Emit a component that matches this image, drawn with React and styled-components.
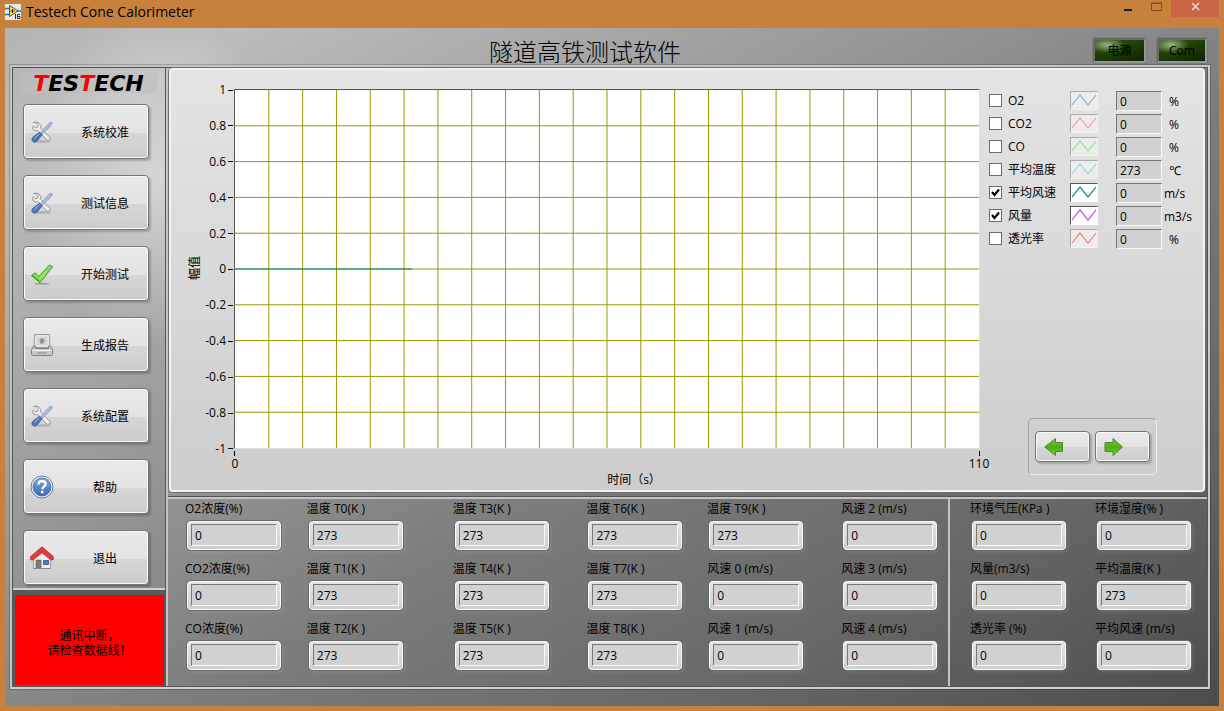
import { useState } from 'react'
import styled, { createGlobalStyle } from 'styled-components'

const GlobalStyle = createGlobalStyle`
    * {
        box-sizing: border-box;
    }

    body {
        margin: 0;
        background: #c8813c;
        color: #000;
        font-family: 'Open Sans', 'Noto Sans', 'Noto Sans CJK SC', sans-serif;
        font-size: 12px;
        line-height: 16px;
    }

    button, input {
        font: inherit;
        color: inherit;
    }
`

const Window = styled.div`
    min-height: 100vh;
    display: flex;
    flex-direction: column;
    padding: 0 5px 5px;
    background: #c8813c;
`

const TitleBar = styled.header`
    height: 28px;
    display: flex;
    align-items: flex-start;
`

const AppName = styled.div`
    flex: 1;
    display: flex;
    align-items: center;
    gap: 5px;
    padding-top: 2px;
    font-size: 14px;
    line-height: 20px;
`

const WindowButton = styled.button`
    width: ${props => props.$close ? '48px' : '29px'};
    height: 17px;
    padding: 0 0 4px;
    border: 0;
    display: flex;
    align-items: center;
    justify-content: center;
    background: ${props => props.$close ? '#c86646' : 'transparent'};
`

const Content = styled.main`
    flex: 1;
    display: flex;
    flex-direction: column;
    padding: 0 9px 17px 5px;
    background:
        radial-gradient(130px 170px at 150px 150px, rgba(255, 255, 255, .45), rgba(255, 255, 255, 0)),
        linear-gradient(150deg, #b4b4b4 0%, #bcbcbc 10%, #a8a8a8 25%, #909090 43%, #7c7c7c 57%, #686868 78%, #4c4c4c 100%);
`

const Header = styled.div`
    height: 37px;
    display: flex;
    align-items: flex-start;
    gap: 11px;
    padding: 10px 3px 0 78px;
`

const Title = styled.h1`
    flex: 1;
    margin: 0;
    text-align: center;
    font-family: 'Noto Sans CJK SC', sans-serif;
    font-weight: 300;
    font-size: 24px;
    line-height: 26px;
`

const Led = styled.div`
    width: ${props => props.$wide ? '53px' : '50px'};
    height: 25px;
    border: 2px solid;
    border-color: #686868 #969696 #969696 #686868;
    outline: 1px solid rgba(0, 0, 0, .08);
    text-align: center;
    line-height: 22px;
    background:
        radial-gradient(ellipse at 12px 5px, rgba(190, 215, 160, .75), rgba(120, 160, 80, 0) 18px),
        linear-gradient(160deg, #35551a, #1d3d06 50%, #0d2400);
`

const Frame = styled.div`
    flex: 1;
    display: flex;
    border: 2px solid;
    border-color: #c4c4c4 #cccccc #d0d0d0 #c4c4c4;
    outline: 1px solid rgba(0, 0, 0, .2);
    box-shadow: inset 0 0 0 1px #555;
    padding: 1px;
`

const Sidebar = styled.aside`
    flex: none;
    width: 153px;
    display: flex;
    flex-direction: column;
    border-right: 1px solid #555;
`

const Logo = styled.div`
    height: 20px;
    margin: 5px 8px 0 7px;
    background: rgba(190, 190, 190, .6);
    text-align: center;
    font-family: 'DejaVu Sans', sans-serif;
    font-weight: bold;
    font-style: italic;
    font-size: 22px;
    line-height: 22px;

    span {
        color: #f00;
    }
`

const Menu = styled.nav`
    flex: 1;
    display: flex;
    flex-direction: column;
    gap: 16px;
    padding: 11px 16px 3px 10px;
`

const Raised = styled.button`
    display: flex;
    align-items: center;
    border: 1px solid #747474;
    border-radius: 4px;
    background: linear-gradient(#e9e9e9, #e3e3e3 52%, #d6d6d6 53%, #cccccc);
    box-shadow: inset 0 0 0 1px #fafafa, 2px 2px 2px rgba(0, 0, 0, .2);
`

const MenuButton = styled(Raised)`
    height: 55px;
    padding: 0 0 0 6px;

    svg {
        flex: none;
    }

    span {
        flex: 1;
        padding: 2px 0 0 8px;
        text-align: center;
    }
`

const Alarm = styled.div`
    height: 98px;
    display: flex;
    align-items: center;
    justify-content: center;
    border-top: 2px solid #d0d0d0;
    padding: 5px 1px 1px 2px;
    background: #5a5a5a;

    p {
        width: 100%;
        height: 100%;
        margin: 0;
        padding-top: 33px;
        background: #f00;
        text-align: center;
        line-height: 15px;
    }
`

const Main = styled.div`
    flex: 1;
    min-width: 0;
    display: flex;
    flex-direction: column;
    border-left: 2px solid #c4c4c4;
`

const ChartPanel = styled.section`
    flex: 1;
    display: flex;
    margin: 0 2px 5px 1px;
    border: 2px solid #f2f2f2;
    border-radius: 4px;
    background: linear-gradient(#e4e4e4, #cdcdcd);
    box-shadow: 0 0 0 1px #707070;
`

const Chart = styled.div`
    flex: 1;
    min-width: 0;
    display: grid;
    grid-template-columns: 13px 32px 1fr;
    grid-template-rows: 375px 16px 16px;
    padding: 11px 0 0 18px;
`

const YTitle = styled.div`
    align-self: center;
    writing-mode: vertical-rl;
    text-orientation: sideways;
    transform: rotate(180deg);
    line-height: 12px;
`

const YScale = styled.div`
    display: flex;
    flex-direction: column;
    justify-content: space-between;
    padding-top: 1px;
    margin-bottom: -1px;

    div {
        display: flex;
        align-items: center;
        justify-content: flex-end;
        gap: 2px;
        padding-right: 1px;
    }

    div::after {
        content: '';
        width: 5px;
        height: 1px;
        background: #000;
    }
`

const Plot = styled.div`
    display: flex;
    flex-direction: column;
    padding-top: 8px;

    svg {
        width: 100%;
        height: 360px;
        border: 1px solid;
        border-color: #555 #e0e0e0 #e0e0e0 #555;
        background: #fff;
    }
`

const XTicks = styled.div`
    height: 7px;
    display: flex;
    justify-content: space-between;
    padding-top: 2px;

    i {
        width: 1px;
        height: 5px;
        background: #000;
    }
`

const XScale = styled.div`
    grid-column: 3;
    display: flex;
    justify-content: space-between;
    margin: 0 -9px;

    span {
        width: 20px;
        display: flex;
        justify-content: center;
    }
`

const XTitle = styled.div`
    grid-column: 3;
    padding-left: 54px;
    text-align: center;
`

const Side = styled.div`
    width: 223px;
    display: flex;
    flex-direction: column;
    justify-content: space-between;
    padding: 19px 0 15px 9px;
`

const LegendRow = styled.div`
    height: 23px;
    display: grid;
    grid-template-columns: 81px 46px 46px 1fr;
    align-items: center;
`

const Check = styled.label`
    display: flex;
    align-items: center;
    gap: 6px;

    input {
        appearance: none;
        width: 13px;
        height: 13px;
        margin: 0;
        border: 1px solid #6c6c6c;
        background: #fff;
    }

    input:checked {
        background: #fff url("data:image/svg+xml,%3Csvg xmlns='http://www.w3.org/2000/svg' viewBox='0 0 11 11'%3E%3Cpath d='M2 5l2.500 3L9 2.500' fill='none' stroke='%23000' stroke-width='2.200'/%3E%3C/svg%3E");
    }
`

const Swatch = styled.svg`
    width: 28px;
    height: 19px;
    border: 1px solid;
    border-color: ${props => props.$on ? '#555 #fff #fff #555' : '#aaa #f2f2f2 #f2f2f2 #aaa'};
    background: ${props => props.$on ? '#fff' : '#ececec'};
`

const Value = styled.input`
    width: 100%;
    height: ${props => props.$tall ? '22px' : '20px'};
    padding: 1px 3px 0;
    border: 1px solid;
    border-color: #777 #f8f8f8 #f8f8f8 #777;
    border-radius: 0;
    background: #d1d1d1;
    outline: 0;
`

const Unit = styled.span`
    padding: 2px 0 0 ${props => props.$long ? '2px' : '7px'};
    line-height: 20px;
`

const Pager = styled.div`
    width: 129px;
    height: 57px;
    display: flex;
    align-items: center;
    justify-content: center;
    gap: 5px;
    margin-left: 39px;
    border: 1px solid;
    border-color: #a0a0a0 #ededed #ededed #a0a0a0;
    border-radius: 5px;
`

const PageButton = styled(Raised)`
    width: 55px;
    height: 31px;
    padding: 0 0 0 8px;
`

const Readouts = styled.section`
    display: grid;
    grid-template-columns: 780fr 259fr;
    border-top: 2px solid #c4c4c4;
    box-shadow: 0 -1px 0 #555;
`

const Group = styled.div`
    min-width: 0;
    display: grid;
    grid-auto-flow: column;
    grid-template-rows: repeat(3, 50px);
    grid-template-columns: ${props => props.$columns};
    row-gap: 10px;
    padding: 2px 0 15px ${props => props.$left};

    & + & {
        border-left: 2px solid #c4c4c4;
    }
`

const Field = styled.label`
    display: flex;
    flex-direction: column;
    gap: 3px;
    white-space: nowrap;
`

const Bezel = styled.span`
    width: 96px;
    height: 31px;
    padding: 3px 4px;
    margin-left: 1px;
    border: 1px solid #6a6a6a;
    border-radius: 5px;
    background: linear-gradient(#e6e6e6, #cecece);
    box-shadow: inset 0 0 0 1px #fafafa, 2px 2px 3px rgba(255, 255, 255, .08);
`

const ToolsIcon = () => (
    <svg width='24' height='24' viewBox='0 0 24 24'>
        <ellipse cx='12' cy='21.500' rx='9' ry='1.500' fill='#000' opacity='.15' />
        <path d='M3 2.500l3 .2 2 2-.4 2.400-2.300.7-2.200-1.900-.8 1.400.7 2.300 2.700 1.400 2-.3 9.600 9.600 2.400-.4.8-2-9.900-9.700.3-2.700-2.200-2.700-2.700-.7z' fill='#ececec' stroke='#999' strokeWidth='1' />
        <path d='M21 2l1.300 1.200-2 3.300-8.500 8-1.500-1.500 7.600-8.600z' fill='#a8bedd' stroke='#8194b3' strokeWidth='.8' />
        <path d='M9.500 12.200l2.600 2.600-5 6.200c-1.500 1.400-3.500 1.500-4.500.3s-1-2.600.3-4z' fill='#4b78bd' stroke='#35588f' strokeWidth='.8' />
        <path d='M4.300 18.500l5-4.700' stroke='#a3c0ea' strokeWidth='1' />
    </svg>
)

const CheckIcon = () => (
    <svg width='24' height='24' viewBox='0 0 24 24'>
        <defs>
            <linearGradient id='tick' x1='0' y1='1' x2='1' y2='0'>
                <stop offset='0' stopColor='#49b917' />
                <stop offset='.4' stopColor='#a2e45c' />
                <stop offset='1' stopColor='#7fd494' />
            </linearGradient>
        </defs>
        <ellipse cx='12' cy='21.800' rx='8' ry='.8' fill='#000' opacity='.3' />
        <path d='M1.500 13.500l3.800-2.600 3.600 3.600L19.500 3l3 1.800L10 20.700z' fill='url(#tick)' stroke='#3f9a25' strokeWidth='1' />
        <path d='M2 13.500L9 19' stroke='#32a20a' strokeWidth='1' />
    </svg>
)

const PrinterIcon = () => (
    <svg width='24' height='24' viewBox='0 0 24 24'>
        <path d='M4.500 1.500h15l.5 13H4z' fill='#e6e6e6' stroke='#9a9a9a' />
        <path d='M6.500 3.500h11v9h-11z' fill='#d6d6d6' />
        <path d='M12 4.500l3.500 3.500H14v2.500h-4V8H8.500z' fill='#949494' />
        <path d='M3.500 13h2v2.500h13V13h2l2 3.500V21c0 1-.5 1.500-1.500 1.500H3C2 22.500 1.500 22 1.500 21v-4.500z' fill='#c8c8c8' stroke='#7f7f7f' />
        <path d='M2.500 17.500h19' stroke='#f8f8f8' />
        <path d='M7 20h10' stroke='#8b8b8b' />
    </svg>
)

const HelpIcon = () => (
    <svg width='24' height='24' viewBox='0 0 24 24'>
        <defs>
            <linearGradient id='help' x1='0' y1='0' x2='0' y2='1'>
                <stop offset='0' stopColor='#86a9db' />
                <stop offset='1' stopColor='#3a67ab' />
            </linearGradient>
        </defs>
        <circle cx='12' cy='12' r='11' fill='#eef2f8' stroke='#5d80b5' />
        <circle cx='12' cy='12' r='9' fill='url(#help)' stroke='#41659e' strokeWidth='.8' />
        <path d='M8.500 9.500c0-2 1.500-3.300 3.600-3.300s3.500 1.200 3.500 3c0 2.500-3.300 2.500-3.300 5' fill='none' stroke='#fff' strokeWidth='2.300' />
        <circle cx='12.200' cy='17' r='1.500' fill='#fff' />
    </svg>
)

const HomeIcon = () => (
    <svg width='24' height='24' viewBox='0 0 24 24'>
        <path d='M3.500 11L12 4l8.500 7v11.500h-17z' fill='#ededed' stroke='#9c9c9c' />
        <path d='M6 14h5v8.500H6z' fill='#7f7b70' stroke='#5d5d55' strokeWidth='.6' />
        <path d='M13.500 14.500h5v4h-5z' fill='#477cc0' stroke='#2d507f' strokeWidth='.8' />
        <path d='M3 22.500h18' stroke='#888' />
        <path d='M12 .8l11.300 9.700v3.200L21 14l-9-7.200L3 14l-2.300-.3v-3.200z' fill='#e23a3a' stroke='#b51c1c' strokeWidth='.7' />
    </svg>
)

const ArrowIcon = ({ right }) => (
    <svg width='20' height='20' viewBox='0 0 20 20'>
        <defs>
            <linearGradient id='arrow' x1='0' y1='0' x2='0' y2='1'>
                <stop offset='0' stopColor='#8ac45c' />
                <stop offset='.5' stopColor='#4cae10' />
                <stop offset='1' stopColor='#74d33d' />
            </linearGradient>
        </defs>
        <path
            d={right ? 'M1 5.500h8V1.500l9.500 8.500L9 18.500v-4H1z' : 'M18.500 5.500h-7V1.500L.8 10l10.700 8.500v-4h7z'}
            fill='url(#arrow)'
            stroke='#4a8a28'
        />
    </svg>
)

const AppIcon = () => (
    <svg width='16' height='16' viewBox='0 0 16 16'>
        <path d='M0 0h16v16H0z' fill='#e6e9ec' />
        <path d='M0 4.500h5M0 10.500h5M11 7h5' stroke='#1b7bb8' strokeWidth='1.500' />
        <path d='M4.500 1.500v11L13 7z' fill='#ffd94a' stroke='#6b5515' />
        <path d='M5.500 7h4M7.500 5v4' stroke='#333' />
        <path d='M10.500 10v5M15 10.500h-2.500v4H15v-2h-2' fill='none' stroke='#333' />
    </svg>
)

const menu = [
    { text: '系统校准', Icon: ToolsIcon },
    { text: '测试信息', Icon: ToolsIcon },
    { text: '开始测试', Icon: CheckIcon },
    { text: '生成报告', Icon: PrinterIcon },
    { text: '系统配置', Icon: ToolsIcon },
    { text: '帮助', Icon: HelpIcon },
    { text: '退出', Icon: HomeIcon },
]

const series = [
    { name: 'O2', color: '#8fb0cc', value: '0', unit: '%' },
    { name: 'CO2', color: '#e8a0a0', value: '0', unit: '%' },
    { name: 'CO', color: '#86e886', value: '0', unit: '%' },
    { name: '平均温度', color: '#9fd3ea', value: '273', unit: '℃' },
    { name: '平均风速', color: '#008080', value: '0', unit: 'm/s', on: true },
    { name: '风量', color: '#c040f0', value: '0', unit: 'm3/s', on: true },
    { name: '透光率', color: '#e88080', value: '0', unit: '%' },
]

const yTicks = ['1', '0.8', '0.6', '0.4', '0.2', '0', '-0.2', '-0.4', '-0.6', '-0.8', '-1']

const measured = [
    ['O2浓度(%)', '0'], ['CO2浓度(%)', '0'], ['CO浓度(%)', '0'],
    ['温度 T0(K )', '273'], ['温度 T1(K )', '273'], ['温度 T2(K )', '273'],
    ['温度 T3(K )', '273'], ['温度 T4(K )', '273'], ['温度 T5(K )', '273'],
    ['温度 T6(K )', '273'], ['温度 T7(K )', '273'], ['温度 T8(K )', '273'],
    ['温度 T9(K )', '273'], ['风速 0 (m/s)', '0'], ['风速 1 (m/s)', '0'],
    ['风速 2 (m/s)', '0'], ['风速 3 (m/s)', '0'], ['风速 4 (m/s)', '0'],
]

const ambient = [
    ['环境气压(KPa )', '0'], ['风量(m3/s)', '0'], ['透光率 (%)', '0'],
    ['环境湿度(% )', '0'], ['平均温度(K )', '273'], ['平均风速 (m/s)', '0'],
]

const Grid = () => (
    <svg viewBox='0 0 220 100' preserveAspectRatio='none' shapeRendering='crispEdges'>
        {
            Array.from({ length: 21 }, (_, i) => (
                <line key={`x${i}`} x1={(i + 1) * 10} x2={(i + 1) * 10} y1='0' y2='100' stroke='#999900' vectorEffect='non-scaling-stroke' />
            ))
        }
        {
            Array.from({ length: 9 }, (_, i) => (
                <line key={`y${i}`} x1='0' x2='220' y1={(i + 1) * 10} y2={(i + 1) * 10} stroke='#999900' vectorEffect='non-scaling-stroke' />
            ))
        }
        <line x1='0' x2='52.500' y1='50' y2='50' stroke='#008080' vectorEffect='non-scaling-stroke' />
    </svg>
)

const Legend = ({ name, color, value, unit, on }) => {

    const [checked, setChecked] = useState(Boolean(on))

    return (
        <LegendRow>
            <Check>
                <input type='checkbox' checked={checked} onChange={() => setChecked(!checked)} />
                {name}
            </Check>
            <Swatch viewBox='0 0 26 17' $on={checked}>
                <path d='M1 13L9 3l8 10 8-10' fill='none' stroke={color} strokeWidth='1.200' />
            </Swatch>
            <Value readOnly value={value} aria-label={name} />
            <Unit $long={unit.length > 1}>{unit}</Unit>
        </LegendRow>
    )
}

const Readout = ({ label, value }) => (
    <Field>
        {label}
        <Bezel><Value $tall readOnly value={value} /></Bezel>
    </Field>
)

const App = () => (
    <Window>
        <GlobalStyle />
        <TitleBar>
            <AppName><AppIcon />Testech Cone Calorimeter</AppName>
            <WindowButton aria-label='minimize'>
                <svg width='10' height='10'><path d='M1 7h8v2H1z' fill='#222' /></svg>
            </WindowButton>
            <WindowButton aria-label='maximize'>
                <svg width='11' height='10'><path d='M.5 1.500h10v7H.5zM0 1h11' fill='none' stroke='#7a4f25' /></svg>
            </WindowButton>
            <WindowButton $close aria-label='close'>
                <svg width='9' height='9'><path d='M1 1l7 7M8 1L1 8' stroke='#f0d5cc' strokeWidth='1.600' /></svg>
            </WindowButton>
        </TitleBar>
        <Content>
            <Header>
                <Title>隧道高铁测试软件</Title>
                <Led $wide>电源</Led>
                <Led>Com</Led>
            </Header>
            <Frame>
                <Sidebar>
                    <Logo><span>T</span>ES<span>T</span>ECH</Logo>
                    <Menu>
                        {
                            menu.map(({ text, Icon }) => (
                                <MenuButton key={text}><Icon /><span>{text}</span></MenuButton>
                            ))
                        }
                    </Menu>
                    <Alarm><p>通讯中断，<br />请检查数据线！</p></Alarm>
                </Sidebar>
                <Main>
                    <ChartPanel>
                        <Chart>
                            <YTitle>幅值</YTitle>
                            <YScale>
                                { yTicks.map(tick => <div key={tick}>{tick}</div>) }
                            </YScale>
                            <Plot>
                                <Grid />
                                <XTicks><i /><i /></XTicks>
                            </Plot>
                            <XScale><span>0</span><span>110</span></XScale>
                            <XTitle>时间（s）</XTitle>
                        </Chart>
                        <Side>
                            <div>
                                { series.map(item => <Legend key={item.name} {...item} />) }
                            </div>
                            <Pager>
                                <PageButton aria-label='previous'><ArrowIcon /></PageButton>
                                <PageButton aria-label='next'><ArrowIcon right /></PageButton>
                            </Pager>
                        </Side>
                    </ChartPanel>
                    <Readouts>
                        <Group $left='17px' $columns='122fr 146fr 134fr 121fr 134fr 107fr'>
                            { measured.map(([label, value]) => <Readout key={label} label={label} value={value} />) }
                        </Group>
                        <Group $left='20px' $columns='125fr 112fr'>
                            { ambient.map(([label, value]) => <Readout key={label} label={label} value={value} />) }
                        </Group>
                    </Readouts>
                </Main>
            </Frame>
        </Content>
    </Window>
)

export default App
